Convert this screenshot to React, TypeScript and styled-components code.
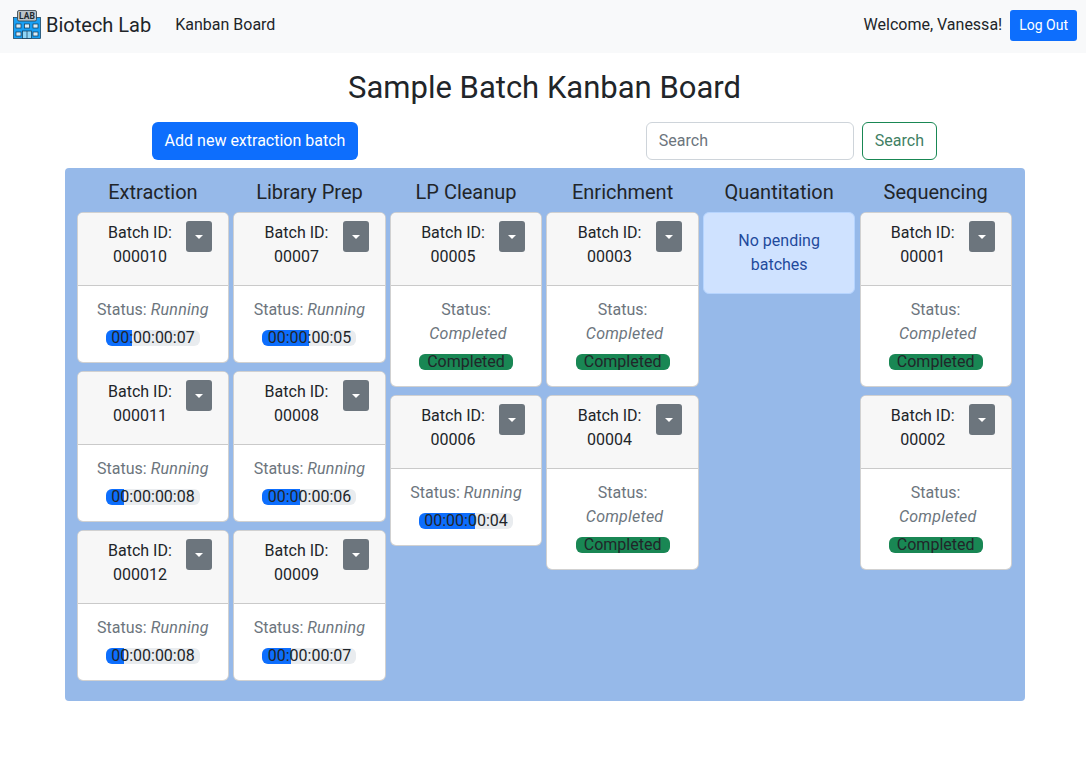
import styled, { createGlobalStyle } from 'styled-components';

type Batch = { id: string; status: string; time?: string; percent?: number };
type Column = { title: string; batches: Batch[] };

const COLUMNS: Column[] = [
  {
    title: 'Extraction',
    batches: [
      { id: '000010', status: 'Running', time: '00:00:00:07', percent: 28 },
      { id: '000011', status: 'Running', time: '00:00:00:08', percent: 19 },
      { id: '000012', status: 'Running', time: '00:00:00:08', percent: 19 },
    ],
  },
  {
    title: 'Library Prep',
    batches: [
      { id: '00007', status: 'Running', time: '00:00:00:05', percent: 50 },
      { id: '00008', status: 'Running', time: '00:00:00:06', percent: 40 },
      { id: '00009', status: 'Running', time: '00:00:00:07', percent: 30 },
    ],
  },
  {
    title: 'LP Cleanup',
    batches: [
      { id: '00005', status: 'Completed' },
      { id: '00006', status: 'Running', time: '00:00:00:04', percent: 60 },
    ],
  },
  {
    title: 'Enrichment',
    batches: [
      { id: '00003', status: 'Completed' },
      { id: '00004', status: 'Completed' },
    ],
  },
  { title: 'Quantitation', batches: [] },
  {
    title: 'Sequencing',
    batches: [
      { id: '00001', status: 'Completed' },
      { id: '00002', status: 'Completed' },
    ],
  },
];

function LabLogo() {
  return (
    <svg width="30" height="30" viewBox="0 0 30 30">
      <rect x="1.5" y="7.5" width="27" height="21" fill="#18a0f5" stroke="#0f3550" strokeWidth="0.7" />
      <rect x="5.5" y="0.5" width="19" height="10.5" rx="1.5" fill="#b9c3ca" stroke="#2f3a42" strokeWidth="0.8" />
      <text x="15" y="8.9" fontSize="8.5" fontWeight="700" textAnchor="middle" fontFamily="Roboto, sans-serif" fill="#1f2a30">
        LAB
      </text>
      {[4, 12.5, 21].map((x) => (
        <rect key={`u-${x}`} x={x} y="14" width="5" height="4" fill="#d8ecf8" stroke="#0f3550" strokeWidth="0.7" />
      ))}
      <rect x="4" y="22" width="5" height="4" fill="#d8ecf8" stroke="#0f3550" strokeWidth="0.7" />
      <rect x="21" y="22" width="5" height="4" fill="#d8ecf8" stroke="#0f3550" strokeWidth="0.7" />
      <rect x="10.5" y="21" width="9" height="7.5" fill="#8fd6f7" stroke="#0f3550" strokeWidth="0.7" />
      <path d="M15 21v7.5" stroke="#0f3550" strokeWidth="0.7" />
    </svg>
  );
}

function BatchCard({ batch }: { batch: Batch }) {
  const running = batch.status === 'Running';
  return (
    <Card>
      <CardHeader>
        <BatchLabel>
          Batch ID:
          <br />
          {batch.id}
        </BatchLabel>
        <Toggle type="button" aria-label="Batch actions">
          <Caret />
        </Toggle>
      </CardHeader>
      <CardBody>
        <StatusLine>
          Status: <StatusValue $wrapped={!running}>{batch.status}</StatusValue>
        </StatusLine>
        <Progress>
          <ProgressFill $done={!running} style={{ width: `${batch.percent ?? 100}%` }} />
          <ProgressLabel>{running ? batch.time : 'Completed'}</ProgressLabel>
        </Progress>
      </CardBody>
    </Card>
  );
}

export default function App() {
  return (
    <>
      <GlobalStyle />
      <Navbar>
        <Brand href="#">
          <LabLogo />
          Biotech Lab
        </Brand>
        <NavLink href="#">Kanban Board</NavLink>
        <NavRight>
          <span>Welcome, Vanessa!</span>
          <LogoutButton type="button">Log Out</LogoutButton>
        </NavRight>
      </Navbar>

      <Title>Sample Batch Kanban Board</Title>

      <Toolbar>
        <AddButton type="button">Add new extraction batch</AddButton>
        <SearchForm>
          <SearchInput type="search" placeholder="Search" />
          <SearchButton type="button">Search</SearchButton>
        </SearchForm>
      </Toolbar>

      <Board>
        {COLUMNS.map((column) => (
          <BoardColumn key={column.title}>
            <ColumnTitle>{column.title}</ColumnTitle>
            {column.batches.length === 0 && <EmptyAlert>No pending batches</EmptyAlert>}
            {column.batches.map((batch) => (
              <BatchCard key={batch.id} batch={batch} />
            ))}
          </BoardColumn>
        ))}
      </Board>
    </>
  );
}

const GlobalStyle = createGlobalStyle`
  * {
    box-sizing: border-box;
  }
  body {
    margin: 0;
    background: #fff;
    color: #212529;
    font-family: Roboto, "Liberation Sans", sans-serif;
    font-size: 16px;
    line-height: 1.5;
  }
`;

const Navbar = styled.nav`
  height: 53px;
  padding: 0 9px 4px 12px;
  background: #f8f9fa;
  display: flex;
  align-items: center;
`;

const Brand = styled.a`
  display: flex;
  align-items: center;
  gap: 4px;
  margin-right: 24px;
  font-size: 20px;
  color: #212529;
  text-decoration: none;
`;

const NavLink = styled.a`
  color: #212529;
  text-decoration: none;
`;

const NavRight = styled.div`
  margin-left: auto;
  display: flex;
  align-items: center;
  gap: 8px;
`;

const LogoutButton = styled.button`
  height: 31px;
  margin-top: 2px;
  padding: 0 9px;
  border: 0;
  border-radius: 3px;
  background: #0d6efd;
  color: #fff;
  font: inherit;
  font-size: 14px;
`;

const Title = styled.h1`
  margin: 16px 0 15px;
  padding-left: 3px;
  text-align: center;
  font-size: 31px;
  font-weight: 400;
  line-height: 38px;
`;

const Toolbar = styled.div`
  display: flex;
  justify-content: space-between;
  padding: 0 149px 0 152px;
  margin-bottom: 8px;
`;

const AddButton = styled.button`
  width: 206px;
  height: 38px;
  padding: 0;
  border: 0;
  border-radius: 6px;
  background: #0d6efd;
  color: #fff;
  font: inherit;
`;

const SearchForm = styled.form`
  display: flex;
  gap: 8px;
`;

const SearchInput = styled.input`
  width: 208px;
  height: 38px;
  padding: 0 12px 2px;
  border: 1px solid #ced4da;
  border-radius: 6px;
  font: inherit;
  color: #212529;
  &::placeholder {
    color: #6c757d;
  }
`;

const SearchButton = styled.button`
  height: 38px;
  padding: 0 12px;
  border: 1px solid #198754;
  border-radius: 6px;
  background: #fff;
  color: #3f7f64;
  font: inherit;
`;

const Board = styled.main`
  width: 960px;
  height: 533px;
  margin-left: 65px;
  padding: 8px 0 0 11.8px;
  background: #96b9e9;
  border-radius: 4px;
  display: grid;
  grid-template-columns: repeat(6, 152.3px);
  column-gap: 4.25px;
  align-items: start;
`;

const BoardColumn = styled.section`
  display: flex;
  flex-direction: column;
  gap: 8px;
`;

const ColumnTitle = styled.h5`
  margin: 0 0 -8px;
  height: 36px;
  text-align: center;
  font-size: 20px;
  font-weight: 400;
  line-height: 33px;
`;

const Card = styled.article`
  background: #fff;
  border: 1px solid rgba(0, 0, 0, 0.18);
  border-radius: 6px;
  overflow: hidden;
`;

const CardHeader = styled.header`
  position: relative;
  height: 73px;
  padding: 8px 42px 0 16px;
  background: #f7f7f7;
  border-bottom: 1px solid rgba(0, 0, 0, 0.18);
  text-align: center;
`;

const BatchLabel = styled.div`
  line-height: 24px;
`;

const Toggle = styled.button`
  position: absolute;
  top: 8px;
  right: 16px;
  width: 26px;
  height: 31px;
  padding: 0;
  border: 0;
  border-radius: 3px;
  background: #6c757d;
  display: flex;
  align-items: center;
  justify-content: center;
`;

const Caret = styled.span`
  width: 0;
  height: 0;
  border-top: 4.8px solid #fff;
  border-left: 4.8px solid transparent;
  border-right: 4.8px solid transparent;
`;

const CardBody = styled.div`
  padding: 12px 16px 16px;
  text-align: center;
`;

const StatusLine = styled.div`
  color: #6c757d;
  line-height: 24px;
  margin-bottom: 8px;
`;

const StatusValue = styled.em<{ $wrapped: boolean }>`
  letter-spacing: 0.25px;
  padding-left: ${({ $wrapped }) => ($wrapped ? '4px' : '0')};
  display: ${({ $wrapped }) => ($wrapped ? 'inline-block' : 'inline')};
`;

const Progress = styled.div`
  position: relative;
  width: 94px;
  height: 16px;
  margin: 0 auto;
  border-radius: 6px;
  background: #e9ecef;
  display: flex;
`;

const ProgressFill = styled.div<{ $done: boolean }>`
  border-radius: ${({ $done }) => ($done ? '6px' : '6px 0 0 6px')};
  background: ${({ $done }) => ($done ? '#198754' : '#0d6efd')};
`;

const ProgressLabel = styled.span`
  position: absolute;
  inset: 0;
  line-height: 16px;
  white-space: nowrap;
`;

const EmptyAlert = styled.div`
  padding: 16px;
  text-align: center;
  background: #cfe2ff;
  border: 1px solid #b6d4fe;
  border-radius: 6px;
  color: #1f4a9c;
`;
